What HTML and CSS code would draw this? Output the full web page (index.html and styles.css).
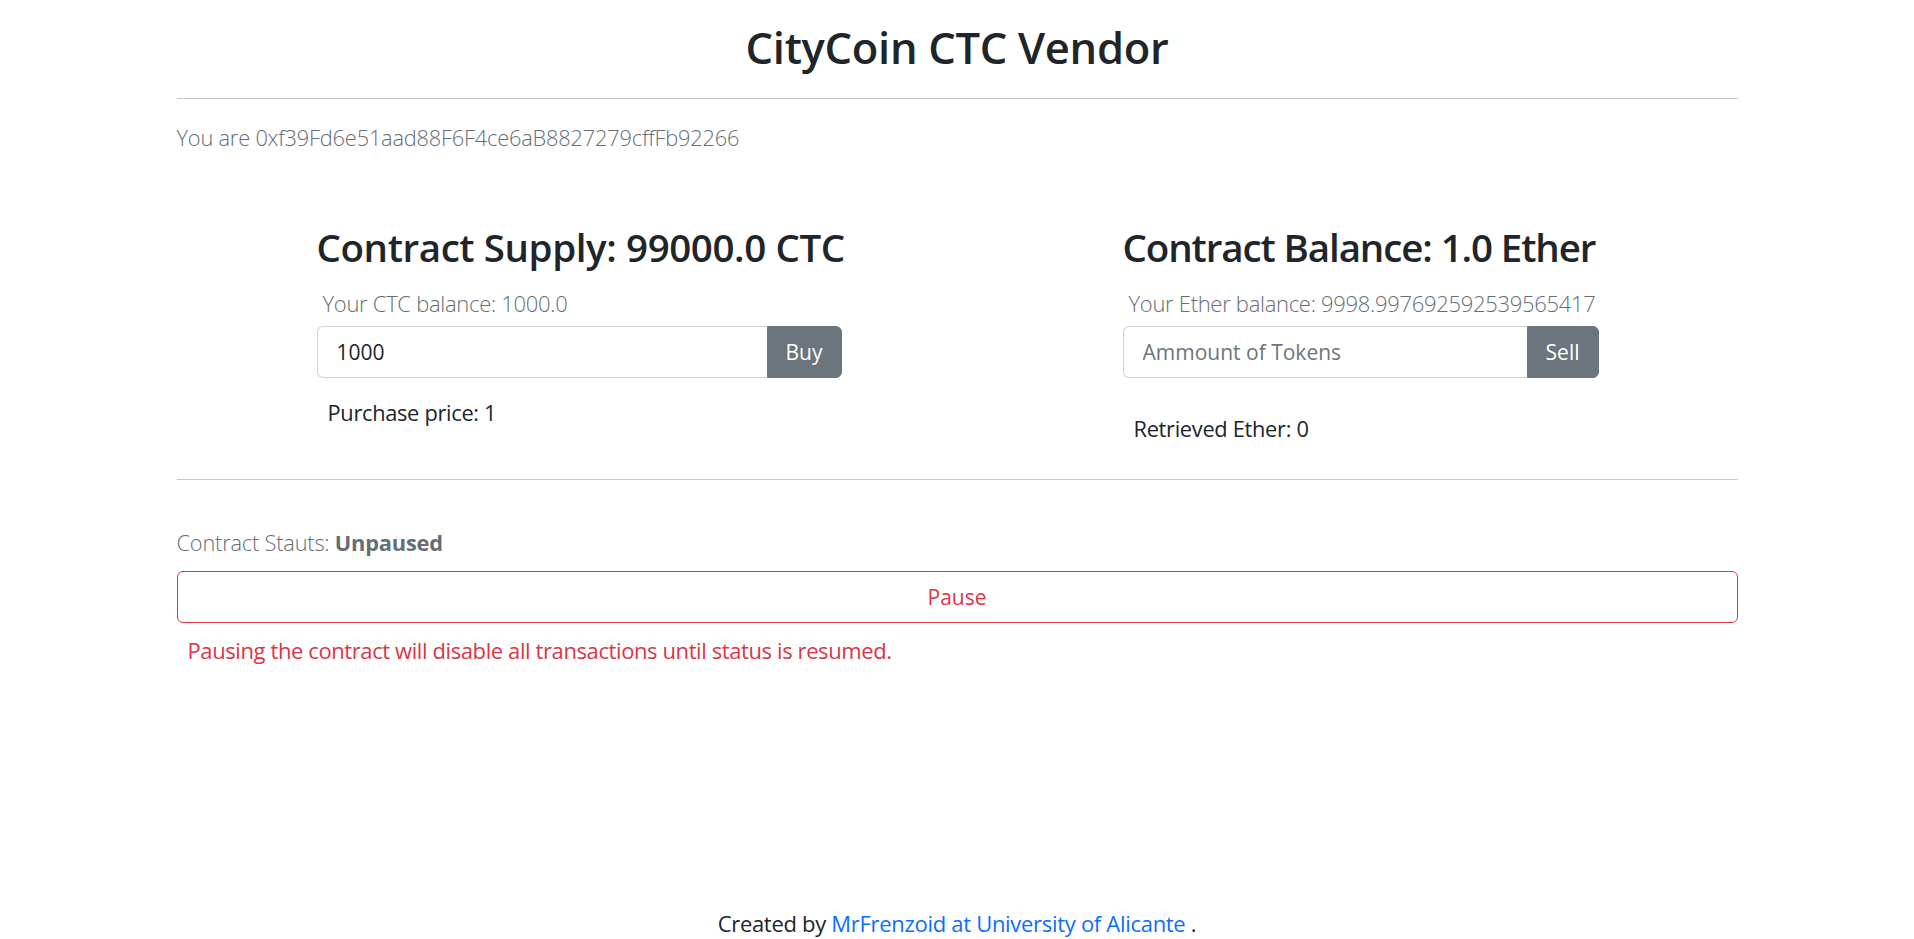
FILE: index.html
```html
<!DOCTYPE html>
<html lang="en">
<head>
<meta charset="utf-8">
<title>CityCoin CTC Vendor</title>
<link rel="stylesheet" href="styles.css">
</head>
<body>
<main class="container">
  <h1 class="title">CityCoin CTC Vendor</h1>
  <hr class="rule">
  <p class="lead muted account">You are 0xf39Fd6e51aad88F6F4ce6aB8827279cffFb92266</p>

  <div class="panels">
    <section class="panel panel-left">
      <h2 class="panel-title">Contract Supply: 99000.0 CTC</h2>
      <p class="lead muted balance">Your CTC balance: 1000.0</p>
      <div class="input-group">
        <input class="field" type="text" value="1000">
        <button class="btn btn-secondary" type="button">Buy</button>
      </div>
      <p class="note note-left">Purchase price: 1</p>
    </section>
    <section class="panel panel-right">
      <h2 class="panel-title panel-title-tight">Contract Balance: 1.0 Ether</h2>
      <p class="lead muted balance">Your Ether balance: 9998.997692592539565417</p>
      <div class="input-group">
        <input class="field" type="text" placeholder="Ammount of Tokens">
        <button class="btn btn-secondary" type="button">Sell</button>
      </div>
      <p class="note note-right">Retrieved Ether: 0</p>
    </section>
  </div>

  <hr class="rule rule-lower">
  <p class="lead muted status">Contract Stauts: <b>Unpaused</b></p>
  <button class="btn btn-outline-danger" type="button">Pause</button>
  <p class="lead warning">Pausing the contract will disable all transactions until status is resumed.</p>
</main>
<footer class="footer">
  <p class="footer-text">Created by <a href="#" class="footer-link">MrFrenzoid at University of Alicante</a> .</p>
</footer>
</body>
</html>
```

FILE: styles.css
```css
* { box-sizing: border-box; }

html, body { height: 100%; }

body {
  margin: 0;
  font-family: "Open Sans", "Noto Sans", sans-serif;
  color: #212529;
  background: #fff;
  display: flex;
  flex-direction: column;
  min-height: 100vh;
}

.container {
  width: 1561px;
  margin: 0 auto;
  flex: 1;
}

.title {
  margin: 18px 0 0;
  text-align: center;
  font-size: 43.5px;
  font-weight: 600;
  line-height: 60px;
  letter-spacing: -0.3px;
}

.rule {
  margin: 20px 0 0;
  border: 0;
  border-top: 1px solid #c8c9ca;
}

.lead {
  font-size: 21.8px;
  font-weight: 300;
  line-height: 30px;
  margin: 0;
}

.muted { color: #656d75; }

.account {
  margin-top: 24px;
  letter-spacing: -0.2px;
}

.panels {
  display: flex;
  gap: 281px;
  padding-left: 140px;
  margin-top: 72px;
}

.panel-left { width: 525px; }
.panel-right { width: 476px; }

.panel-title {
  margin: 0;
  font-size: 38.5px;
  font-weight: 600;
  line-height: 44px;
  letter-spacing: -0.4px;
  white-space: nowrap;
}

.panel-title-tight { letter-spacing: -1.1px; }

.balance {
  margin-top: 19px;
  padding-left: 6px;
  font-size: 22px;
  letter-spacing: -0.3px;
  white-space: nowrap;
}

.input-group {
  display: flex;
  margin-top: 8px;
  height: 52px;
}

.field {
  flex: 1;
  min-width: 0;
  height: 52px;
  border: 1px solid #ced4da;
  border-right: 0;
  border-radius: 6px 0 0 6px;
  padding: 0 19px;
  font-family: inherit;
  font-size: 21px;
  color: #212529;
  outline: none;
}

.field::placeholder { color: #6c757d; opacity: 1; }

.btn {
  font-family: inherit;
  font-size: 21px;
  line-height: 30px;
  cursor: pointer;
}

.btn-secondary {
  height: 52px;
  border: 1px solid #6c757d;
  background: #6c757d;
  color: #fff;
  border-radius: 0 6px 6px 0;
  padding: 0 18px;
}

.note {
  margin: 0;
  font-size: 21.8px;
  line-height: 30px;
  letter-spacing: -0.3px;
}

.note-left { margin-top: 20px; padding-left: 11px; }
.note-right { margin-top: 36px; padding-left: 11px; }

.rule-lower { margin-top: 35px; }

.status {
  margin-top: 48px;
  letter-spacing: -0.2px;
}

.status b { font-weight: 700; }

.btn-outline-danger {
  display: block;
  width: 100%;
  height: 52px;
  margin-top: 13px;
  border: 1px solid #dc3545;
  border-radius: 6px;
  background: #fff;
  color: #dc3545;
}

.warning {
  color: #dc3545;
  font-size: 22px;
  font-weight: 400;
  margin-top: 12px;
  padding-left: 11px;
  letter-spacing: -0.4px;
}

.footer {
  text-align: center;
  padding-bottom: 1px;
}

.footer-text {
  margin: 0;
  font-size: 22px;
  line-height: 30px;
  letter-spacing: -0.3px;
}

.footer-link {
  color: #0d6efd;
  text-decoration: none;
}
```
